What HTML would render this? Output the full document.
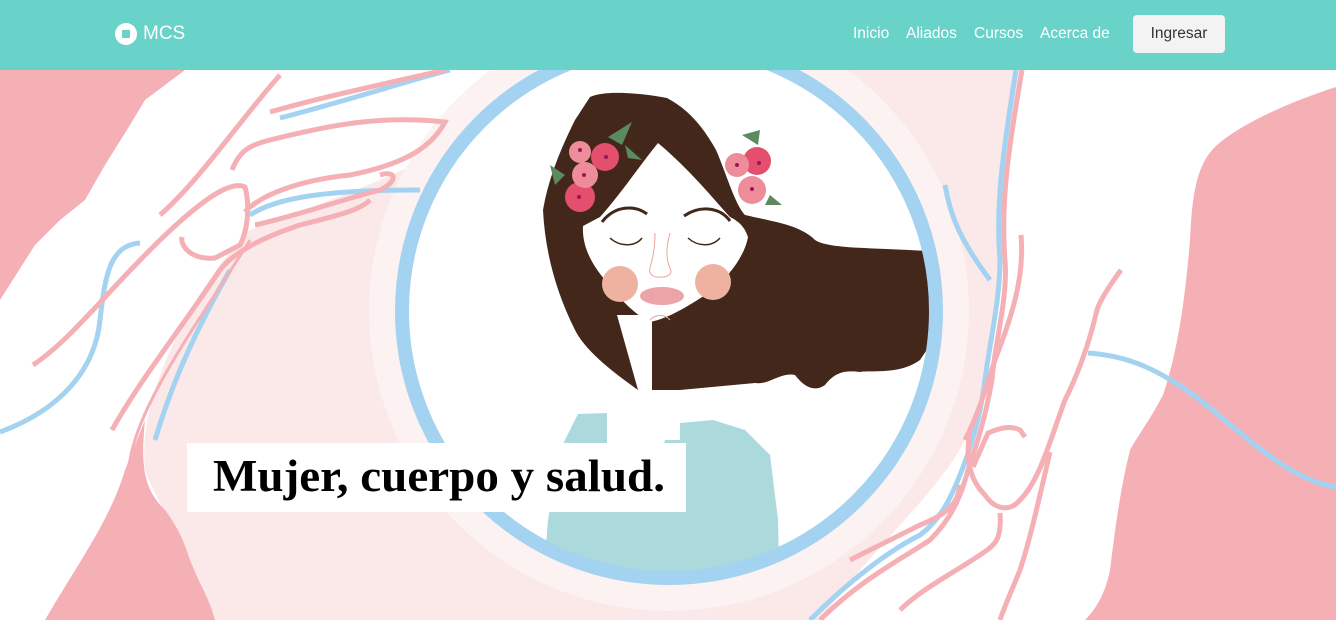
<!DOCTYPE html>
<html><head><meta charset="utf-8"><style>
*{margin:0;padding:0;box-sizing:border-box}
body{width:1336px;height:620px;overflow:hidden;background:#fff;font-family:"Liberation Sans",sans-serif;position:relative}
nav{position:absolute;left:0;top:0;width:1336px;height:70px;background:#69d3ca;z-index:2}
.logo{position:absolute;left:115px;top:23px;width:22px;height:22px;border-radius:50%;background:#fff}
.logo i{position:absolute;left:7px;top:7px;width:8px;height:8px;background:#69d3ca}
.brand{position:absolute;left:143px;top:23px;color:#fff;font-size:19px;line-height:22px}
.lnk{position:absolute;top:24px;color:#fff;font-size:15.5px;line-height:20px}
.btn{position:absolute;left:1133px;top:15px;width:92px;height:38px;background:#f3f3f3;border-radius:4px;color:#333;font-size:15.5px;line-height:38px;text-align:center}
svg{position:absolute;left:0;top:70px}
</style></head><body>
<nav>
<div class="logo"><i></i></div><div class="brand">MCS</div>
<div class="lnk" style="left:853px">Inicio</div>
<div class="lnk" style="left:906px">Aliados</div>
<div class="lnk" style="left:974px">Cursos</div>
<div class="lnk" style="left:1040px">Acerca de</div>
<div class="btn">Ingresar</div>
</nav>
<svg width="1336" height="550" viewBox="0 70 1336 550">
<defs><clipPath id="c"><circle cx="669" cy="311" r="262"/></clipPath></defs>
<rect x="0" y="70" width="1336" height="550" fill="#fff"/>
<polygon points="0,70 185,70 145,100 130,125 105,165 85,200 60,220 35,245 0,300" fill="#f5b0b6"/>
<path d="M250,230 C330,200 420,170 470,130 C520,95 560,80 600,70 L1020,70 C1010,130 1000,200 1000,270 C995,330 985,400 965,440 C940,490 880,540 820,620 L215,620 C195,560 160,510 145,470 C140,420 160,370 180,330 C200,290 225,255 250,230 Z" fill="#fbe8e9"/>
<circle cx="669" cy="311" r="300" fill="#fdf2f2"/>
<path d="M145,420 C140,470 145,490 165,510 C180,530 185,545 190,560 C200,585 210,600 215,620 L45,620 C80,560 110,520 125,470 Z" fill="#f5b0b6"/>
<path d="M1336,87 C1280,105 1230,130 1212,150 C1195,170 1192,200 1190,240 C1185,300 1178,350 1163,395 C1150,420 1135,440 1130,450 C1120,490 1115,530 1110,570 C1105,595 1095,610 1085,620 L1336,620 Z" fill="#f5b0b6"/>
<g fill="none" stroke-width="5" stroke-linecap="butt">
<path d="M0,432 C60,410 95,370 100,320 C105,275 110,245 140,243" stroke="#a3d3f0"/>
<path d="M160,215 C200,180 240,120 280,75" stroke="#f5b0b6"/>
<path d="M33,365 C70,340 100,300 150,250 C200,200 230,180 245,187 C250,205 248,230 240,245 L215,258 C190,260 180,245 182,237" stroke="#f5b0b6"/>
<path d="M232,170 C240,150 250,145 270,140 C330,125 380,115 445,122 C430,150 400,165 350,175 C300,180 260,195 245,212" stroke="#f5b0b6"/>
<path d="M250,215 C280,195 340,190 420,190" stroke="#a3d3f0"/>
<path d="M255,225 C300,215 340,200 380,190 C400,180 395,170 380,175" stroke="#f5b0b6"/>
<path d="M112,430 C140,380 180,330 220,270 C235,250 270,235 300,225 C340,215 360,210 370,200" stroke="#f5b0b6"/>
<path d="M155,440 C170,390 190,340 230,270" stroke="#a3d3f0"/>
<path d="M50,620 C90,560 120,510 130,460 C140,400 200,320 250,240" stroke="#f5b0b6" stroke-width="3"/>
<path d="M280,118 C350,100 410,80 450,70" stroke="#a3d3f0"/>
<path d="M270,112 C330,95 380,85 445,70" stroke="#f5b0b6"/>
<path d="M1022,70 C1010,140 1000,200 1005,260 C1008,300 995,340 992,380 C985,420 975,450 968,470 C960,500 950,520 930,540 C900,560 860,580 820,620" stroke="#f5b0b6"/>
<path d="M1016,70 C1005,140 995,200 1000,260 C1000,300 990,340 985,380 C980,420 970,450 960,475 C950,500 940,520 920,535 C890,550 850,580 810,620" stroke="#a3d3f0"/>
<path d="M1021,235 C1025,280 1010,320 995,360 C985,390 980,410 965,440" stroke="#f5b0b6"/>
<path d="M1121,270 C1110,285 1100,300 1097,310 C1090,340 1080,370 1065,400 C1050,440 1040,480 1020,500 C1010,512 995,510 985,495 C970,480 965,460 970,430" stroke="#f5b0b6"/>
<path d="M1088,353 C1130,356 1160,370 1200,400 C1250,440 1290,480 1336,487" stroke="#a3d3f0"/>
<path d="M973,467 L988,433 C1000,428 1010,425 1020,430 L1025,437" stroke="#f5b0b6"/>
<path d="M1050,452 C1040,495 1030,540 1020,570 C1012,590 1005,605 1000,620" stroke="#f5b0b6"/>
<path d="M960,485 C958,505 945,515 920,525 C890,540 870,550 850,560" stroke="#f5b0b6"/>
<path d="M1000,513 C1002,540 995,545 980,555 C950,575 920,590 900,610" stroke="#f5b0b6"/>
<path d="M945,185 C950,215 960,240 990,280" stroke="#a3d3f0"/>
</g>
<circle cx="669" cy="311" r="262" fill="#fff"/>
<g clip-path="url(#c)">
<path d="M590,97 C605,90 640,93 667,98 C690,110 705,130 716,150 C725,170 735,205 745,215 C775,222 800,225 815,240 C830,250 880,247 940,252 L940,330 L920,360 C900,375 870,370 860,372 C845,370 835,372 825,385 C815,392 805,388 795,375 C780,372 770,385 755,383 L680,390 L652,390 L638,390 C610,370 585,350 575,330 C555,290 545,250 543,210 C548,180 560,150 575,120 Z" fill="#42271a"/>
<path d="M658,143 C640,165 620,195 600,217 L583,226 C582,245 590,262 605,280 C620,300 637,316 650,322 C670,318 690,305 713,290 C730,275 745,255 748,237 C745,228 740,222 730,217 C710,195 690,170 658,143 Z" fill="#fff"/>
<polygon points="617,315 652,315 652,415 638,415 638,390" fill="#fff"/>
<path d="M540,620 L548,520 L560,450 L578,414 L607,413 L607,460 L660,460 L665,440 L680,440 L680,423 L713,420 L745,430 L770,455 L778,520 L780,620 Z" fill="#acd9dc"/>
</g>
<circle cx="669" cy="311" r="267" fill="none" stroke="#a3d3f0" stroke-width="14"/>
<circle cx="620" cy="284" r="18" fill="#efb2a0"/>
<circle cx="713" cy="282" r="18" fill="#efb2a0"/>
<ellipse cx="662" cy="296" rx="22" ry="9" fill="#eca4a9"/>
<g fill="none" stroke="#42271a" stroke-width="3">
<path d="M602,222 C615,205 635,205 647,214"/>
<path d="M684,216 C700,205 720,207 730,221"/>
</g>
<g fill="none" stroke="#42271a" stroke-width="1.5">
<path d="M610,238 C620,247 635,247 642,238"/>
<path d="M688,238 C698,247 712,247 720,238"/>
</g>
<g fill="none" stroke="#eaa694" stroke-width="1">
<path d="M655,233 C655,250 652,260 650,268 C648,275 655,278 662,277 C668,277 673,274 670,268 C667,262 665,250 670,233"/>
<path d="M650,320 C655,314 665,314 670,320"/>
</g>
<g fill="#5b8a5e">
<path d="M608,137 L632,122 L622,145 Z"/><path d="M625,145 L642,160 L628,158 Z"/>
<path d="M550,165 L565,175 L555,185 Z"/><path d="M742,135 L760,130 L758,145 Z"/><path d="M770,195 L782,205 L765,205 Z"/>
</g>
<g fill="#e44f6d">
<circle cx="605" cy="157" r="14"/><circle cx="580" cy="197" r="15"/><circle cx="757" cy="161" r="14"/>
</g>
<g fill="#ee8c9a">
<circle cx="580" cy="152" r="11"/><circle cx="585" cy="175" r="13"/><circle cx="737" cy="165" r="12"/><circle cx="752" cy="190" r="14"/>
</g>
<g fill="#a0135a">
<circle cx="606" cy="157" r="2"/><circle cx="580" cy="150" r="2"/><circle cx="584" cy="175" r="2"/><circle cx="579" cy="197" r="2"/><circle cx="759" cy="163" r="2"/><circle cx="737" cy="165" r="2"/><circle cx="752" cy="189" r="2"/>
</g>
<rect x="187" y="443" width="499" height="69" fill="#fff"/>
<text x="213" y="491" font-family="Liberation Serif, serif" font-weight="bold" font-size="45" fill="#000" textLength="452" lengthAdjust="spacingAndGlyphs">Mujer, cuerpo y salud.</text>
</svg>
</body></html>
